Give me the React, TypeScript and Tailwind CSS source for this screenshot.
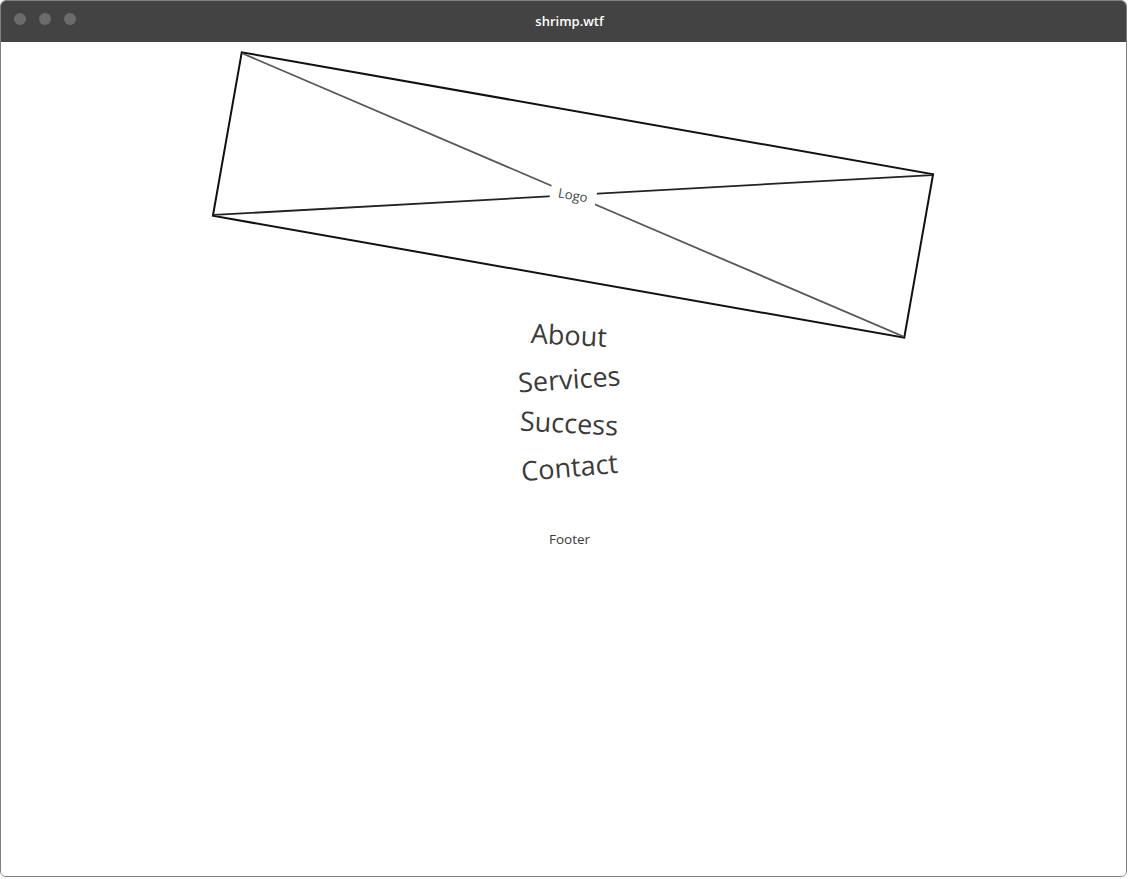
const navItems = [
  { label: "About", tilt: "rotate-[3deg]" },
  { label: "Services", tilt: "-rotate-[4deg]" },
  { label: "Success", tilt: "rotate-[3deg]" },
  { label: "Contact", tilt: "-rotate-[5deg]" },
];

function LogoPlaceholder() {
  return (
    <div className="relative ml-[220px] mt-[69px] h-[168px] w-[704px] rotate-[10deg] border-2 border-[#111]">
      <svg viewBox="0 0 704 168" className="absolute inset-0 h-full w-full" preserveAspectRatio="none">
        <line x1="0" y1="0" x2="704" y2="168" stroke="#555" strokeWidth="1.8" />
        <line x1="704" y1="0" x2="0" y2="168" stroke="#222" strokeWidth="1.8" />
      </svg>
      <span className="absolute left-1/2 top-1/2 -translate-x-1/2 -translate-y-1/2 bg-white px-2 text-[13px] leading-[18px] text-[#444]">
        Logo
      </span>
    </div>
  );
}

export default function App() {
  return (
    <div className="h-[879px] w-[1129px] bg-white" style={{ fontFamily: '"Open Sans", "Noto Sans", sans-serif' }}>
      <div className="flex h-[877px] w-[1127px] flex-col overflow-hidden rounded-[6px] border-[1.5px] border-[#808080]">
        <div className="relative flex h-[41px] shrink-0 items-center justify-center bg-[#434343] pl-[12px]">
          <div className="absolute left-[13px] top-[12px] flex gap-[13px]">
            <span className="h-[12px] w-[12px] rounded-full bg-[#6b6b6b]" />
            <span className="h-[12px] w-[12px] rounded-full bg-[#6b6b6b]" />
            <span className="h-[12px] w-[12px] rounded-full bg-[#6b6b6b]" />
          </div>
          <span className="text-[13px] font-semibold text-white">shrimp.wtf</span>
        </div>
        <div className="flex-1 bg-white">
          <LogoPlaceholder />
          <nav className="mt-[34px] flex flex-col items-center pl-[12px]">
            {navItems.map((item) => (
              <span key={item.label} className={`text-[27px] leading-[44px] text-[#3a3a3a] ${item.tilt}`}>
                {item.label}
              </span>
            ))}
          </nav>
          <p className="mt-[40px] pl-[12px] text-center text-[13.5px] leading-[20px] text-[#3a3a3a]">Footer</p>
        </div>
      </div>
    </div>
  );
}
